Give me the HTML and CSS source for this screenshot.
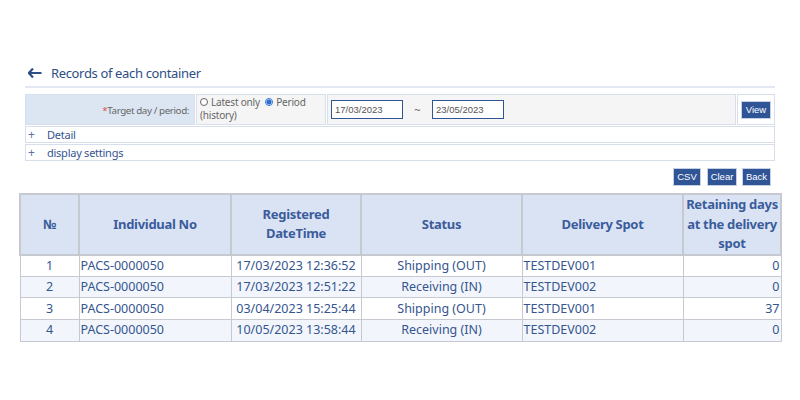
FILE: index.html
```html
<!DOCTYPE html>
<html>
<head>
<meta charset="utf-8">
<link rel="stylesheet" href="styles.css">
</head>
<body>
<div class="page">
  <div class="top">
    <h1 class="title">
      <svg class="back-arrow" width="14" height="10" viewBox="0 0 14 10"><path d="M5 0.5 L0.8 5 L5 9.5 M1 5 H13.5" fill="none" stroke="#2d4e86" stroke-width="2.2"/></svg>
      <span>Records of each container</span>
    </h1>
    <div class="form-row">
      <div class="cell label"><span class="req">*</span>Target day / period:</div>
      <div class="cell radios">
        <label><span class="radio"></span>Latest only</label>
        <label><span class="radio on"></span>Period</label>
        <span class="hist">(history)</span>
      </div>
      <div class="cell dates">
        <span class="input">17/03/2023</span>
        <span class="tilde">~</span>
        <span class="input">23/05/2023</span>
      </div>
      <div class="cell view"><button class="btn">View</button></div>
    </div>
    <div class="collapse"><span class="plus">+</span>Detail</div>
    <div class="collapse"><span class="plus">+</span>display settings</div>
  </div>
  <div class="actions">
    <button class="btn b-csv">CSV</button>
    <button class="btn b-clear">Clear</button>
    <button class="btn b-back">Back</button>
  </div>
  <div class="grid-wrap">
  <table class="grid">
    <colgroup>
      <col style="width:59px"><col style="width:152px"><col style="width:130px"><col style="width:161px"><col style="width:161px"><col style="width:98px">
    </colgroup>
    <thead>
      <tr><th>№</th><th>Individual No</th><th>Registered DateTime</th><th>Status</th><th>Delivery Spot</th><th>Retaining days at the delivery spot</th></tr>
    </thead>
    <tbody>
      <tr><td class="c">1</td><td>PACS-0000050</td><td class="c">17/03/2023 12:36:52</td><td class="c">Shipping (OUT)</td><td>TESTDEV001</td><td class="r">0</td></tr>
      <tr><td class="c">2</td><td>PACS-0000050</td><td class="c">17/03/2023 12:51:22</td><td class="c">Receiving (IN)</td><td>TESTDEV002</td><td class="r">0</td></tr>
      <tr><td class="c">3</td><td>PACS-0000050</td><td class="c">03/04/2023 15:25:44</td><td class="c">Shipping (OUT)</td><td>TESTDEV001</td><td class="r">37</td></tr>
      <tr><td class="c">4</td><td>PACS-0000050</td><td class="c">10/05/2023 13:58:44</td><td class="c">Receiving (IN)</td><td>TESTDEV002</td><td class="r">0</td></tr>
      <tr class="spacer"><td></td><td></td><td></td><td></td><td></td><td></td></tr>
    </tbody>
  </table>
  </div>
</div>
</body>
</html>
```
FILE: styles.css
```css
* { box-sizing: border-box; }
html, body { margin: 0; padding: 0; background: #fff; }
body { font-family: "Noto Sans", "Open Sans", sans-serif; color: #35558f; width: 800px; height: 400px; overflow: hidden; }
.page { padding-top: 63px; }
.top { margin: 0 25px 0 25px; }
.title {
  display: flex; align-items: center; gap: 9px;
  margin: 0; padding: 0 0 4px 3px;
  font-size: 13px; letter-spacing: -0.35px; font-weight: 400; color: #2d4e86;
  border-bottom: 2px solid #e3e9f2;
  height: 25px;
}
.back-arrow { display: block; }
.form-row {
  margin-top: 6px;
  display: grid;
  grid-template-columns: 170px 130px 409px 38px;
  gap: 1px;
  height: 31px;
}
.cell { border: 1px solid #d6dfeb; font-size: 10px; color: #666; }
.label {
  background: #dce6f2;
  display: flex; align-items: center; justify-content: flex-end;
  padding-right: 5px; font-size: 9.8px; letter-spacing: -0.4px; padding-top: 1px;
}
.req { color: #d9534f; }
.radios { background: #f5f5f5; padding: 1px 2px 0 3px; line-height: 13px; letter-spacing: -0.2px; }
.radios label { margin-right: 3px; }
.radio {
  display: inline-block; width: 8px; height: 8px; border-radius: 50%;
  border: 1px solid #666; background: #fff; margin-right: 3px; vertical-align: 0;
}
.radio.on { border-color: #2f6fd0; background: radial-gradient(circle, #2f6fd0 0 2.4px, #fff 2.7px); }
.hist { display: block; }
.dates { background: #f5f5f5; display: flex; align-items: center; padding-left: 3px; }
.input {
  display: inline-block; width: 72px; height: 19px; border: 1.5px solid #2f5597; background: #fff;
  font-family: "Liberation Sans", Arial, sans-serif; font-size: 9.5px; color: #555; padding: 3px 0 0 3px;
}
.tilde { width: 29px; text-align: center; color: #666; font-size: 11px; }
.view { display: flex; align-items: center; justify-content: center; background: #fff; }
.btn {
  font-family: "Liberation Sans", Arial, sans-serif; font-size: 9.5px; color: #fff;
  background: #2f5597; border: 1px solid #c5d1e3; padding: 0; height: 18px; line-height: 16px; cursor: pointer;
}
.view .btn { width: 30px; }
.collapse {
  margin-top: 1px; height: 17px; border: 1px solid #d6dfeb;
  font-size: 11px; letter-spacing: -0.25px; color: #35558f; display: flex; align-items: center; line-height: 15px;
}
.plus { width: 21px; padding-left: 2px; color: #5a74a8; font-size: 12px; text-align: left; }
.actions {
  display: flex; justify-content: flex-end; gap: 6px;
  margin: 7px 29px 0 0; height: 19px;
}
.actions .btn { height: 18px; }
.b-csv { width: 28px; }
.b-clear { width: 30px; }
.b-back { width: 29px; margin-left: -1px; }
.grid-wrap { margin: 6px 0 0 18px; padding: 0 1px; width: 765px; height: 149px; overflow: hidden; }
.grid {
  width: 761px;
  border-collapse: collapse;
  table-layout: fixed;
  font-size: 12.5px;
}
.grid th {
  background: #dae3f3; color: #3a5c9c; font-weight: 700; font-size: 13px; letter-spacing: -0.3px;
  border: 2px solid #c6c9cf; height: 57px; line-height: 19.5px; padding: 0 1px;
}
.grid td {
  border: 1px solid #c6c9cf; height: 21.7px; padding: 0 1px; color: #35558f; line-height: 18px; white-space: nowrap;
}
.grid tbody tr:nth-child(even) td { background: #f2f6fc; }
.grid td.c { text-align: center; }
.grid td.r { text-align: right; }
```
